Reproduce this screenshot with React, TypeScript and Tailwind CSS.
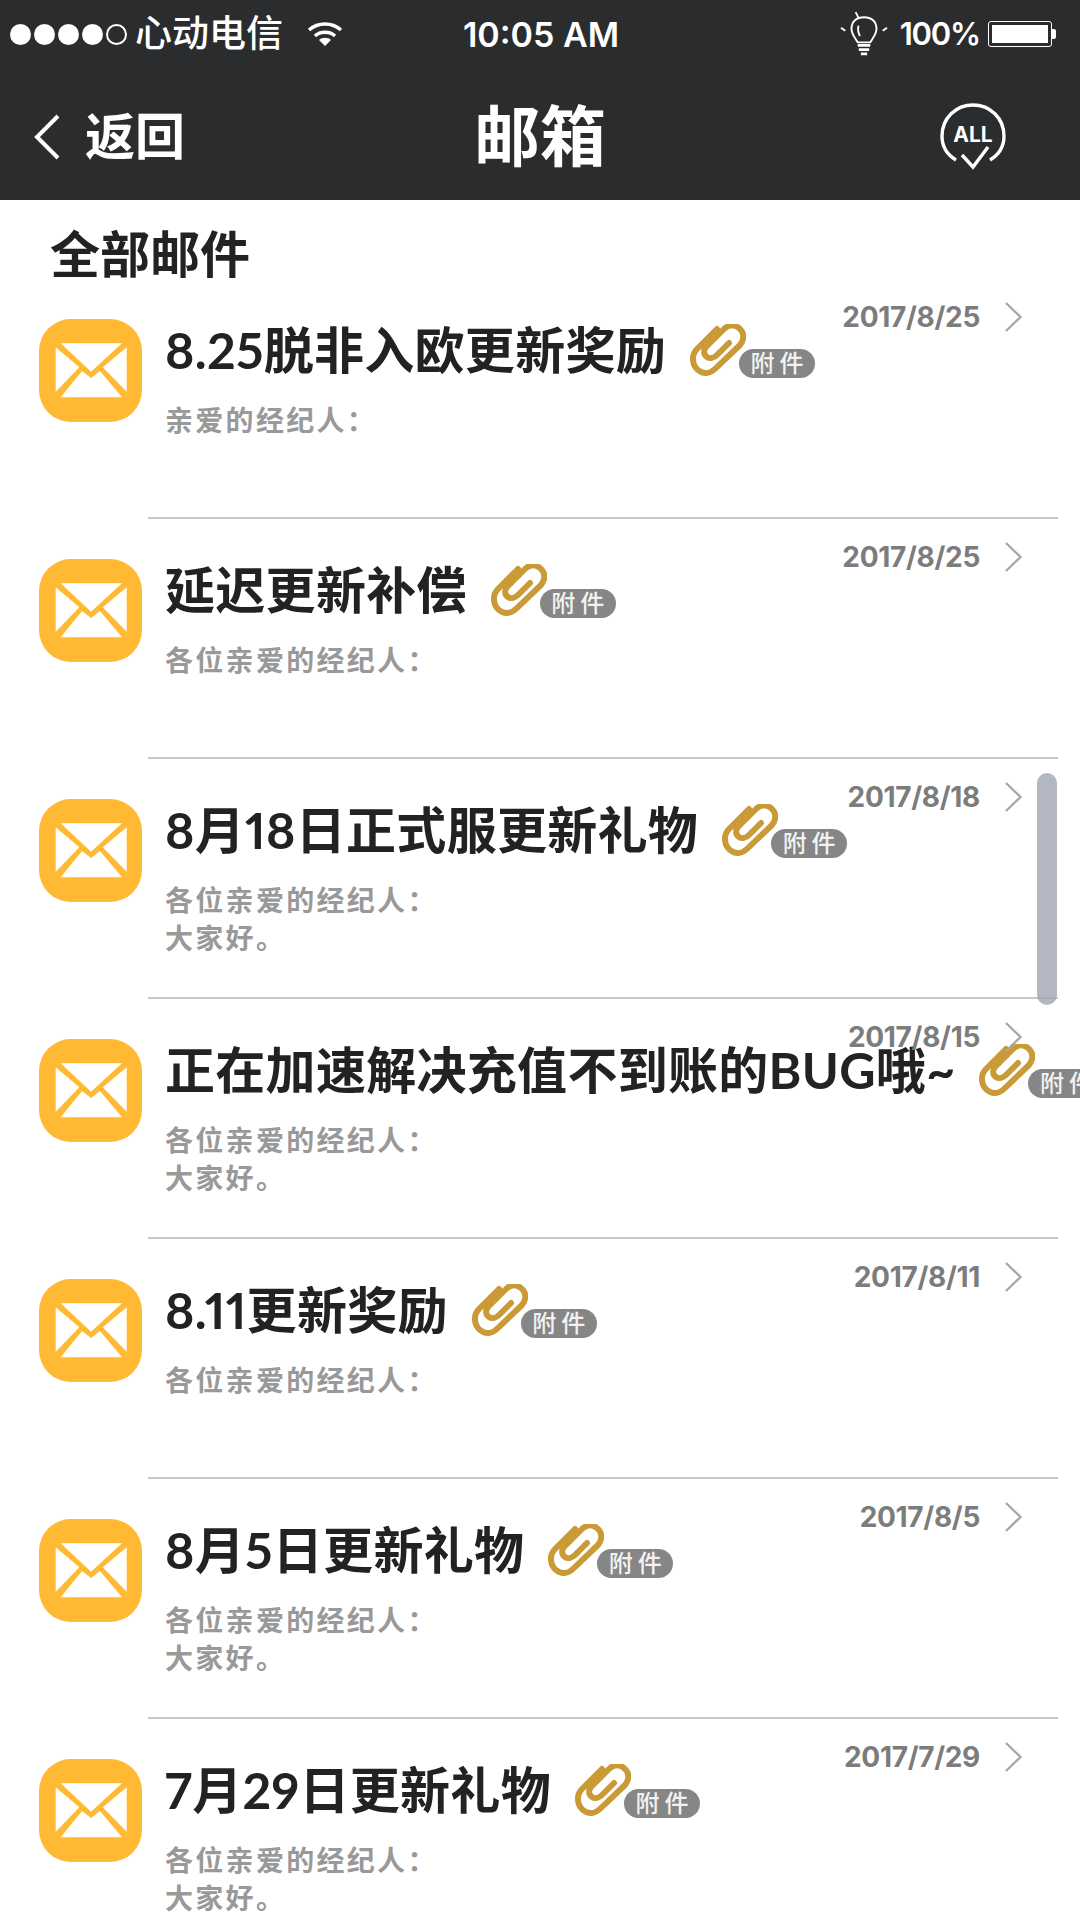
import React from 'react';

type Mail = {
  title: string;
  date: string;
  lines: string[];
};

const mails: Mail[] = [
  { title: '8.25脱非入欧更新奖励', date: '2017/8/25', lines: ['亲爱的经纪人：'] },
  { title: '延迟更新补偿', date: '2017/8/25', lines: ['各位亲爱的经纪人：'] },
  { title: '8月18日正式服更新礼物', date: '2017/8/18', lines: ['各位亲爱的经纪人：', '大家好。'] },
  { title: '正在加速解决充值不到账的BUG哦~', date: '2017/8/15', lines: ['各位亲爱的经纪人：', '大家好。'] },
  { title: '8.11更新奖励', date: '2017/8/11', lines: ['各位亲爱的经纪人：'] },
  { title: '8月5日更新礼物', date: '2017/8/5', lines: ['各位亲爱的经纪人：', '大家好。'] },
  { title: '7月29日更新礼物', date: '2017/7/29', lines: ['各位亲爱的经纪人：', '大家好。'] },
];

function MailIcon() {
  return (
    <div className="w-[103px] h-[103px] shrink-0 mt-[40px] rounded-[32px] bg-[#ffb933]">
      <svg viewBox="0 0 103 103" className="w-full h-full" fill="#fff">
        <polygon points="21.7,24.3 83,24.3 52,52.7" />
        <polygon points="16.7,28.3 40.3,48.3 16.7,72.7" />
        <polygon points="87.7,28.3 63.7,48.3 87.7,72.7" />
        <polygon points="21.7,78.3 43,52 52,59 61,52 83,78.3" />
      </svg>
    </div>
  );
}

function Attachment() {
  return (
    <div className="flex items-end ml-[24px] shrink-0">
      <svg viewBox="0 0 56 52" className="w-[56px] h-[52px] shrink-0" fill="none" stroke="#c99a35" strokeWidth="6" strokeLinecap="round" strokeLinejoin="round">
        <path d="M27 5 L7 25 C1 31 2 41 8 46 C14 51 21 49 26 44 L50 21 C55 15 54 8 49 4 C44 0 38 1 34 5 L16 23 C13 27 14 31 17 33 C20 35 24 34 27 31 L39 19" />
      </svg>
      <div className="ml-[-7px] mb-[-2px] w-[76px] h-[29px] pl-[5px] rounded-full bg-[#868686] text-[#f2f2f2] text-[24px] leading-[29px] font-medium text-center tracking-[5px] whitespace-nowrap">
        附件
      </div>
    </div>
  );
}

function MailRow({ mail }: { mail: Mail }) {
  return (
    <div className="flex h-[240px] pl-[39px] pr-[22px]">
      <MailIcon />
      <div className="relative flex-1 min-w-0 ml-[6px] pl-[17px] border-b-2 border-[#c8c8c8]">
        <div className="flex items-center mt-[40px] h-[62px]">
          <span className="text-[50px] leading-[62px] font-bold text-[#222] whitespace-nowrap tracking-[0.3px] proportional-nums font-['Lato','Noto_Sans_CJK_SC',sans-serif]">{mail.title}</span>
          <Attachment />
        </div>
        <div className="mt-[21px] text-[28px] leading-[38px] font-bold text-[#999] tracking-[2.3px]">
          {mail.lines.map(line => (
            <div key={line}>{line}</div>
          ))}
        </div>
        <div className="absolute top-[22px] right-[36px] flex items-center gap-[25px]">
          <span className="text-[28px] leading-[32px] font-bold text-[#7c7c7c] tracking-[-0.3px]">{mail.date}</span>
          <svg viewBox="0 0 17 30" className="w-[17px] h-[30px]" fill="none" stroke="#a8a8a8" strokeWidth="2.4">
            <path d="M1 1 L15.5 15 L1 29" />
          </svg>
        </div>
      </div>
    </div>
  );
}

export default function App() {
  return (
    <div className="relative w-[1080px] h-[1920px] overflow-hidden bg-white font-['Inter','Noto_Sans_CJK_SC',sans-serif]">
      <div className="h-[200px] bg-[#2b2c2e] text-white">
        <div className="flex items-center justify-between h-[68px] pl-[10px] pr-[24px]">
          <div className="flex items-center w-[356px]">
            <div className="flex gap-[3px]">
              <span className="w-[21px] h-[21px] rounded-full bg-white" />
              <span className="w-[21px] h-[21px] rounded-full bg-white" />
              <span className="w-[21px] h-[21px] rounded-full bg-white" />
              <span className="w-[21px] h-[21px] rounded-full bg-white" />
              <span className="w-[21px] h-[21px] rounded-full border-2 border-white" />
            </div>
            <span className="ml-[8px] text-[37px] font-medium whitespace-nowrap">心动电信</span>
            <svg viewBox="0 0 36 26" className="ml-[24px] w-[36px] h-[26px] shrink-0" fill="none" stroke="#fff" strokeWidth="3.4">
              <path d="M2 9 C11 1 25 1 34 9" />
              <path d="M8 15 C13 10 23 10 28 15" />
              <path d="M18 25 L12 19 C15 16 21 16 24 19 Z" fill="#fff" stroke="none" />
            </svg>
          </div>
          <span className="text-[34px] font-semibold whitespace-nowrap">10:05 AM</span>
          <div className="flex items-center justify-end w-[340px]">
            <svg viewBox="0 0 46 44" className="w-[48px] h-[46px]" fill="none" stroke="#fff" strokeWidth="1.8">
              <path d="M15 1 L18 7 M1 16 L5 19 M45 16 L41 19" />
              <path d="M17 30 C14 25 11 22 11 17 C11 10 16 6 23 6 C30 6 35 10 35 17 C35 22 32 25 29 30 Z" />
              <path d="M18 14 C16 17 18 21 19 24" />
              <path d="M17 33 H29 M18 37 H28 M20 41 H26" strokeWidth="2.6" />
            </svg>
            <span className="ml-[12px] text-[31px] font-semibold tracking-[-1.2px]">100%</span>
            <div className="ml-[8px] w-[64px] h-[26px] p-[3px] border border-white rounded-[3px]">
              <div className="w-full h-full bg-white" />
            </div>
            <div className="w-[4px] h-[10px] bg-white rounded-r-[2px]" />
          </div>
        </div>
        <div className="grid grid-cols-3 items-center h-[132px] pt-[6px] px-[34px]">
          <div className="flex items-center">
            <svg viewBox="0 0 26 46" className="w-[26px] h-[46px]" fill="none" stroke="#fff" strokeWidth="4">
              <path d="M24 2 L3 23 L24 44" />
            </svg>
            <span className="ml-[25px] text-[50px] font-bold">返回</span>
          </div>
          <div className="text-center text-[66px] font-bold">邮箱</div>
          <div className="flex justify-end pr-[40px]">
            <svg viewBox="0 0 66 68" className="w-[66px] h-[68px]" fill="none" stroke="#fff" strokeWidth="3.4">
              <path d="M16 57 C6 51 2 42 2 33 C2 15 16 2 33 2 C50 2 64 15 64 33 C64 42 60 51 50 57" />
              <path d="M22 52 L33 64 L48 44" />
              <text x="33" y="39" textAnchor="middle" fontSize="21" fontWeight="700" fill="#fff" stroke="none">ALL</text>
            </svg>
          </div>
        </div>
      </div>
      <div className="h-[79px] pl-[50px] pt-[25px] text-[50px] leading-[60px] font-bold text-[#222]">全部邮件</div>
      {mails.map(mail => (
        <MailRow key={mail.date + mail.title} mail={mail} />
      ))}
      <div className="absolute left-[1037px] top-[773px] w-[20px] h-[232px] rounded-full bg-[#9fa5b3]/80" />
    </div>
  );
}
